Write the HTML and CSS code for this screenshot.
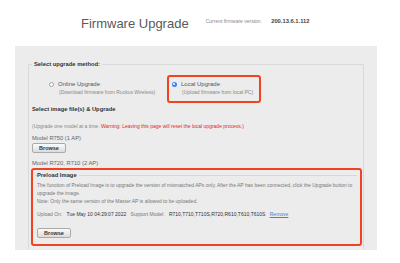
FILE: index.html
```html
<!DOCTYPE html>
<html lang="en">

<head>
  <meta charset="UTF-8">
  <meta name="viewport" content="width=device-width, initial-scale=1.0">
  <title>Firmware Upgrade</title>
  <link rel="stylesheet" href="styles.css">
</head>

<body>
  <div class="header">
    <h1>Firmware Upgrade</h1>
    <div class="version">Current firmware version: <b>200.13.6.1.112</b></div>
  </div>

  <div class="panel">
    <fieldset class="method">
      <legend>Select upgrade method:</legend>
      <div class="options">
        <label class="option online">
          <span class="radio"></span>
          <span class="option-text">
            <span class="option-name">Online Upgrade</span>
            <span class="option-desc">(Download firmware from Ruckus Wireless)</span>
          </span>
        </label>
        <label class="option local marked">
          <span class="radio checked"></span>
          <span class="option-text">
            <span class="option-name">Local Upgrade</span>
            <span class="option-desc">(Upload firmware from local PC)</span>
          </span>
        </label>
      </div>

      <h5>Select image file(s) &amp; Upgrade</h5>
      <p class="hint">(Upgrade one model at a time. <span class="warn">Warning: Leaving this page will reset the local upgrade process.)</span></p>

      <div class="model">Model R750 (1 AP)</div>
      <div class="btn">Browse</div>
      <div class="model">Model R720, R710 (2 AP)</div>

      <div class="preload marked">
        <fieldset>
          <legend>Preload Image</legend>
          <p class="desc">The function of Preload Image is to upgrade the version of mismatched APs only. After the AP has been connected, click the Upgrade button to upgrade the image.<br>Note: Only the same version of the Master AP is allowed to be uploaded.</p>
          <p class="upload">
            <span>Upload On:</span>
            <span class="val">Tue May 10 04:29:07 2022</span>
            <span>Support Model:</span>
            <span class="val">R710,T710,T710S,R720,R610,T610,T610S</span>
            <a href="#">Remove</a>
          </p>
          <div class="btn">Browse</div>
        </fieldset>
      </div>
    </fieldset>
  </div>
</body>

</html>
```

FILE: styles.css
```css
body{
  margin: 0;
  font-family: "Liberation Sans", Arial, sans-serif;
  color: #555;
  background: #fff;
}
h1,h5,p{
  margin: 0;
}
.header{
  display: flex;
  align-items: flex-start;
  height: 46px;
  box-sizing: border-box;
  padding: 15.5px 0 0 81px;
}
.header h1{
  font-size: 13px;
  line-height: 16px;
  font-weight: normal;
  color: #5a5a5a;
}
.version{
  margin: 2.3px 0 0 17px;
  font-size: 5px;
  line-height: 7px;
  color: #888;
}
.version b{
  margin-left: 8px;
  font-size: 5.8px;
  color: #444;
}
.panel{
  width: 362px;
  margin-left: 15px;
  box-sizing: border-box;
  padding: 14px 13px 1px;
  background: #ececec;
}
fieldset{
  margin: 0;
  min-width: 0;
}
legend{
  padding: 0 2px;
  font-size: 5.8px;
  line-height: 8px;
  font-weight: bold;
  color: #333;
}
.method{
  border: 1px solid #d9d9d9;
  border-bottom: none;
  padding: 7px 1px 3px 3px;
}
.options{
  display: flex;
  margin-left: 12px;
}
.option{
  display: flex;
  align-items: flex-start;
  gap: 4.5px;
  box-sizing: border-box;
  border: 2px solid transparent;
  border-radius: 2px;
  padding: 3px 6px 4px 2.5px;
}
.online{
  width: 123px;
}
.option.marked,
.preload.marked{
  border: 2px solid #f04323;
  border-radius: 3px;
}
.radio{
  flex-shrink: 0;
  width: 5px;
  height: 5px;
  margin-top: 1.5px;
  box-sizing: border-box;
  border-radius: 50%;
  border: 0.6px solid #a5a5a5;
  background: #fff;
  position: relative;
}
.radio.checked{
  border: none;
  background: #3a82f7;
}
.radio.checked::after{
  content: "";
  position: absolute;
  left: 1.6px;
  top: 1.6px;
  width: 1.8px;
  height: 1.8px;
  border-radius: 50%;
  background: #fff;
}
.option-text{
  display: flex;
  flex-direction: column;
}
.option-name{
  font-size: 6px;
  line-height: 8px;
  color: #555;
}
.option-desc{
  padding-left: 1px;
  font-size: 5px;
  line-height: 9px;
  color: #888;
  white-space: nowrap;
}
h5{
  margin-top: 2px;
  font-size: 5.8px;
  line-height: 8px;
  color: #333;
}
.hint{
  margin-top: 9.5px;
  font-size: 5px;
  line-height: 7px;
  color: #888;
}
.warn{
  color: #e3262a;
}
.model{
  margin-top: 4.5px;
  font-size: 5.8px;
  line-height: 8px;
  color: #666;
}
.btn{
  width: 34px;
  height: 10px;
  margin-top: 1px;
  box-sizing: border-box;
  border: 1px solid #aaa;
  border-radius: 2px;
  background: linear-gradient(#fbfbfb, #dcdcdc);
  font-size: 5.5px;
  line-height: 8px;
  font-weight: bold;
  text-align: center;
  color: #333;
}
.btn + .model{
  margin-top: 6px;
}
.preload{
  margin: 1px 0 0 -1px;
  padding: 1px 3px 6px 1.5px;
}
.preload fieldset{
  border: none;
  border-top: 1px solid #d6d6d6;
  padding: 2px 0 0 2.5px;
}
.preload legend{
  padding: 0 2px 0 0;
}
.desc{
  font-size: 5px;
  line-height: 8px;
  color: #777;
}
.upload{
  margin-top: 5px;
  font-size: 5px;
  line-height: 8px;
  color: #777;
}
.upload span{
  margin-right: 3px;
}
.upload .val{
  color: #333;
}
.upload a{
  color: #4a80c4;
}
.preload .btn{
  margin-top: 10px;
}
```
